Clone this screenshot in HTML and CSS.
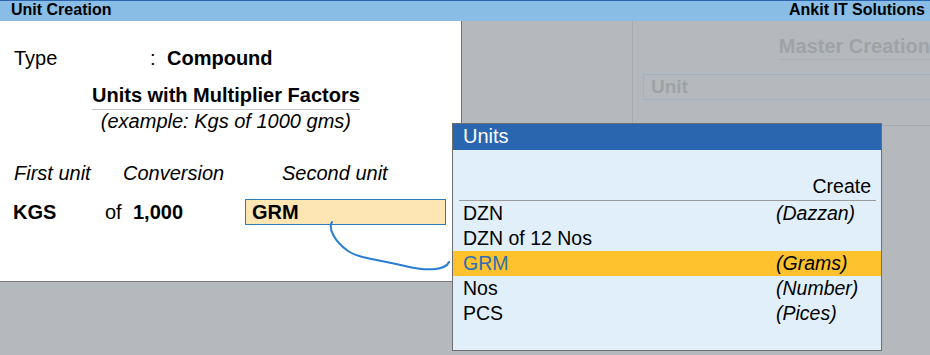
FILE: index.html
```html
<!DOCTYPE html>
<html lang="en">
<head>
    <meta charset="UTF-8">
    <meta name="viewport" content="width=device-width, initial-scale=1.0">
    <title>Unit Creation</title>
    <link rel="stylesheet" href="styles.css">
</head>
<body>
    <div class="screen">
        <div class="titlebar">
            <span>Unit Creation</span>
            <span>Ankit IT Solutions</span>
        </div>

        <div class="main">
            <div class="form-panel">
                <div class="type-row">
                    <span class="type-label">Type</span>
                    <span class="colon">:</span>
                    <span class="bold">Compound</span>
                </div>

                <div class="heading-group">
                    <div class="heading">Units with Multiplier Factors</div>
                    <div class="example">(example: Kgs of 1000 gms)</div>
                </div>

                <div class="col-heads">
                    <span class="col-first">First unit</span>
                    <span class="col-conv">Conversion</span>
                    <span>Second unit</span>
                </div>

                <div class="values">
                    <span class="bold val-first">KGS</span>
                    <span class="val-of">of</span>
                    <span class="bold val-num">1,000</span>
                    <div class="unit-input">GRM</div>
                </div>
            </div>

            <div class="master">
                <div class="master-title"><span>Master Creation</span></div>
                <div class="master-field">Unit</div>
            </div>
        </div>

        <!-- list of units popup -->
        <div class="popup">
            <div class="popup-head">Units</div>
            <div class="popup-body">
                <div class="create">Create</div>
                <div class="item"><span>DZN</span><span class="desc">(Dazzan)</span></div>
                <div class="item"><span>DZN of 12 Nos</span><span class="desc"></span></div>
                <div class="item active"><span>GRM</span><span class="desc">(Grams)</span></div>
                <div class="item"><span>Nos</span><span class="desc">(Number)</span></div>
                <div class="item"><span>PCS</span><span class="desc">(Pices)</span></div>
            </div>
        </div>

        <svg class="scribble" width="930" height="355" viewBox="0 0 930 355">
            <path d="M332 222 C328 228, 334 241, 348 251 C360 259, 382 260, 405 266 C425 271, 445 271, 449 262"
                  fill="none" stroke="#2b7dd2" stroke-width="2" stroke-linecap="round"/>
        </svg>
    </div>
</body>
</html>
```

FILE: styles.css
```css
/* General reset */
* {
    margin: 0;
    padding: 0;
    box-sizing: border-box;
}

body {
    font-family: 'Liberation Sans', Arial, sans-serif;
    background-color: #b5b9bd;
    color: #000;
}

.screen {
    position: relative;
    width: 930px;
    height: 355px;
    overflow: hidden;
}

.titlebar {
    display: flex;
    justify-content: space-between;
    height: 21px;
    padding: 0 5px 2px 11px;
    border-top: 1px solid #2a67b0;
    background-color: #89bde6;
    font-size: 16px;
    font-weight: bold;
    line-height: 18px;
}

.main {
    display: flex;
    align-items: flex-start;
}

.bold {
    font-weight: bold;
}

/* left white form */
.form-panel {
    width: 462px;
    height: 261px;
    padding: 26px 0 0 14px;
    background: #fff;
    border-right: 1px solid #707070;
    border-bottom: 1px solid #7a7a7a;
    font-size: 20px;
    line-height: 23px;
}

.type-row {
    display: flex;
}

.type-label {
    width: 136px;
}

.colon {
    width: 17px;
}

.heading-group {
    display: inline-flex;
    flex-direction: column;
    align-items: center;
    margin: 14px 0 0 78px;
}

.heading {
    font-weight: bold;
    padding-bottom: 2px;
    border-bottom: 1px solid #c4c4c4;
}

.example {
    font-style: italic;
}

.col-heads {
    display: flex;
    margin-top: 29px;
    font-style: italic;
}

.col-first {
    width: 109px;
}

.col-conv {
    width: 159px;
}

.values {
    display: flex;
    align-items: center;
    margin-top: 14px;
    margin-left: -1px;
}

.val-first {
    width: 92px;
}

.val-of {
    width: 28px;
}

.val-num {
    width: 112px;
}

.unit-input {
    width: 201px;
    height: 26px;
    padding-left: 6px;
    line-height: 24px;
    font-weight: bold;
    background: #fde6b3;
    border: 1px solid #2d7cba;
}

/* greyed master screen behind */
.master {
    flex: 1;
    height: 105px;
    margin-left: 170px;
    border-left: 1px solid #a6aaae;
    border-bottom: 1px solid #a6aaae;
    color: #9fa3a7;
    font-weight: bold;
}

.master-title {
    text-align: right;
    padding-top: 13px;
    margin-right: -2px;
}

.master-title span {
    display: inline-block;
    font-size: 20px;
    line-height: 24px;
    padding: 0 2px 1px 1px;
    border-bottom: 1px solid #acb0b4;
}

.master-field {
    height: 26px;
    margin: 14px -20px 0 10px;
    padding-left: 7px;
    font-size: 19px;
    line-height: 24px;
    border: 1px solid #a2b2bf;
}

/* popup list */
.popup {
    position: absolute;
    left: 452px;
    top: 123px;
    width: 430px;
    height: 228px;
    background: #e1effa;
    border: 1px solid #6e6e6e;
    font-size: 19.5px;
}

.popup-head {
    height: 26px;
    padding-left: 10px;
    background: #2a66b0;
    color: #fff;
    font-size: 20px;
    line-height: 24px;
}

.popup-body {
    padding-top: 25px;
}

.create {
    margin: 0 5px 0 6px;
    padding-right: 5px;
    padding-bottom: 2px;
    text-align: right;
    line-height: 23px;
    border-bottom: 1px solid #9a9a9a;
}

.item {
    display: grid;
    grid-template-columns: 313px 1fr;
    height: 25px;
    padding-left: 10px;
    line-height: 25px;
}

.item .desc {
    font-style: italic;
}

.item.active {
    background: #fec22f;
    color: #2f6db4;
}

.item.active .desc {
    color: #000;
}

.scribble {
    position: absolute;
    left: 0;
    top: 0;
    pointer-events: none;
}
```
